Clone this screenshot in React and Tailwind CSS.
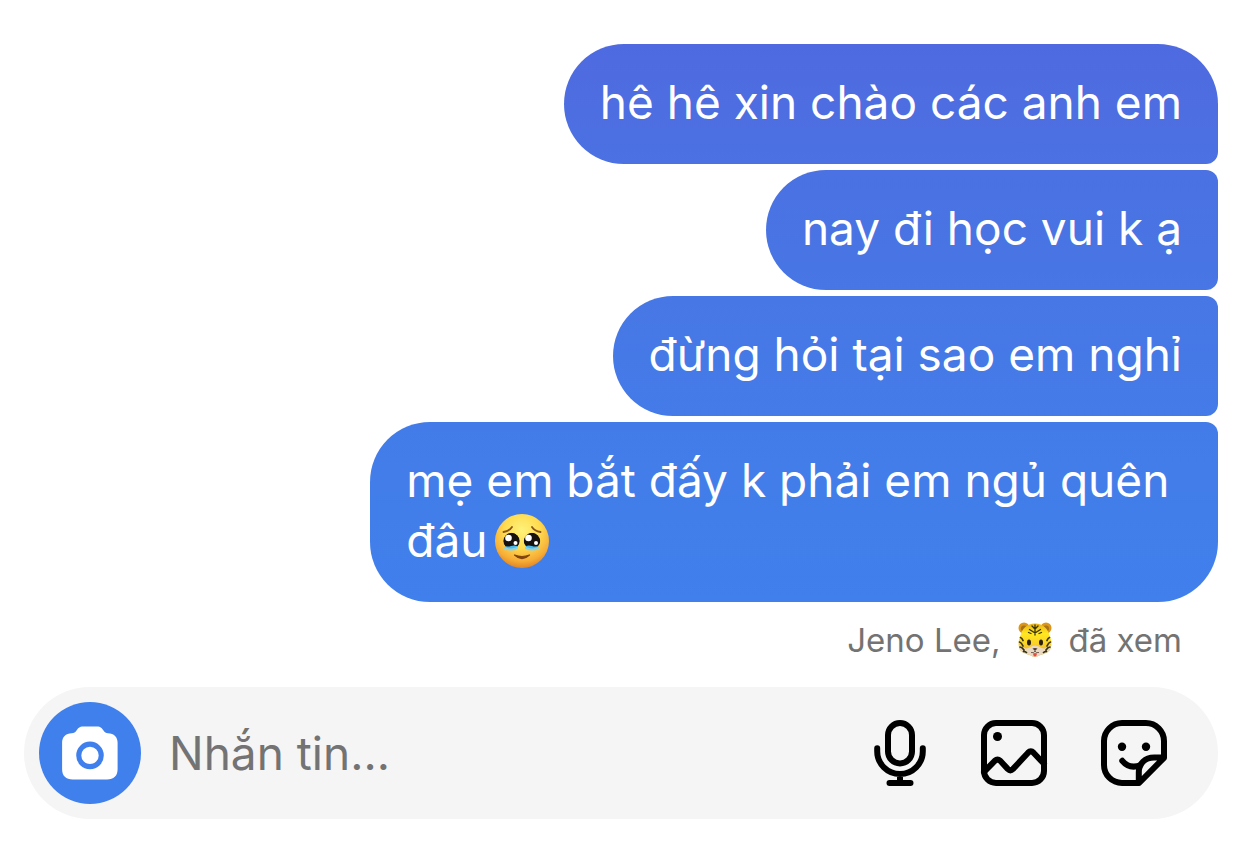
import React, { useState } from 'react';

const PleadingFace = () => (
  <svg role="img" aria-label="🥹" viewBox="0 0 54 54" className="inline-block size-[54px] ml-2 -mt-1.5 align-middle">
    <defs>
      <radialGradient id="face" cx="0.5" cy="0.3" r="0.72">
        <stop offset="0" stopColor="#fff27a" />
        <stop offset="0.45" stopColor="#ffdc50" />
        <stop offset="0.8" stopColor="#f6ac36" />
        <stop offset="1" stopColor="#dd7f22" />
      </radialGradient>
      <clipPath id="leftEye">
        <circle cx="16.500" cy="27" r="8.300" />
      </clipPath>
      <clipPath id="rightEye">
        <circle cx="37" cy="27" r="8.300" />
      </clipPath>
    </defs>
    <circle cx="27" cy="27" r="27" fill="url(#face)" />
    <g clipPath="url(#leftEye)">
      <circle cx="16.500" cy="27" r="8.300" fill="#18120f" />
      <path d="M8 31q4 2.500 8 1t9 1v6H8z" fill="#48b9ea" />
    </g>
    <g clipPath="url(#rightEye)">
      <circle cx="37" cy="27" r="8.300" fill="#18120f" />
      <path d="M28 33q5-2.500 9-1t9-1v8H28z" fill="#48b9ea" />
    </g>
    <path d="M10 34q6 3 12 0M31 34q6 3 12 0" fill="none" stroke="#86d3e8" strokeWidth="2" strokeLinecap="round" />
    <circle cx="13.500" cy="24" r="3.300" fill="#fff" />
    <circle cx="20.500" cy="29" r="2" fill="#fff" />
    <circle cx="33.500" cy="24" r="3.300" fill="#fff" />
    <circle cx="41" cy="29" r="2" fill="#fff" />
    <path d="M8.500 18q6-1 8.500-5M37 13q2.500 4 8.500 5" fill="none" stroke="#8a541a" strokeWidth="1.800" strokeLinecap="round" />
    <path d="M19.500 41q7.500 7 15 0-7.500 3-15 0z" fill="#80440f" stroke="#80440f" strokeWidth="1.200" strokeLinejoin="round" />
  </svg>
);

const TigerFace = () => (
  <svg role="img" aria-label="🐯" viewBox="0 0 34 36" className="inline-block w-[34px] h-9 mx-[17px] -mt-1.5 align-middle">
    <defs>
      <linearGradient id="fur" x1="0" y1="0" x2="0" y2="1">
        <stop offset="0" stopColor="#e8b01c" />
        <stop offset="0.3" stopColor="#ffe81e" />
        <stop offset="0.6" stopColor="#fbd22a" />
        <stop offset="1" stopColor="#e5a52d" />
      </linearGradient>
    </defs>
    <circle cx="6" cy="6" r="5.500" fill="#d99618" />
    <circle cx="28" cy="6" r="5.500" fill="#d99618" />
    <circle cx="6" cy="6.500" r="3" fill="#a8701a" />
    <circle cx="28" cy="6.500" r="3" fill="#a8701a" />
    <path d="M17 1.500c8 0 13 5 14.500 12 2.500 5 2.500 12 0 15-3 3-7.500 4-10.500 5-2 1.800-6 1.800-8 0-3-1-7.500-2-10.500-5-2.500-3-2.500-10 0-15C4 6.500 9 1.500 17 1.500z" fill="url(#fur)" />
    <path d="M1 23c2 0 4 3.500 7 3.500 3.500 0 5-3 9-3s5.500 3 9 3c3 0 5-3.500 7-3.500.5 7-6.500 8.500-12 10.500-2 1.800-6 1.800-8 0C7.500 31.500.5 30 1 23z" fill="#e9d8c2" />
    <g fill="none" stroke="#37330f" strokeLinecap="round">
      <path d="M17 3v10M14 4l3 3 3-3M11.500 7.500L17 11l5.500-3.500M10.500 10.500l2.500 1M23.500 10.500l-2.500 1" strokeWidth="1.300" />
      <path d="M2.500 15.500q1.500.5 2.500 3M1.500 20q2 .5 3.500 4M2 25q2 0 4 3M5.500 29.500q2 0 3 1M31.500 15.500q-1.500.5-2.500 3M32.500 20q-2 .5-3.500 4M32 25q-2 0-4 3M28.500 29.500q-2 0-3 1" strokeWidth="1.700" />
    </g>
    <ellipse cx="11" cy="20.500" rx="2" ry="3" fill="#2a200c" />
    <ellipse cx="23" cy="20.500" rx="2" ry="3" fill="#2a200c" />
    <path d="M14.500 26.500q2.500-1 5 0L17 29z" fill="#4b3932" />
    <path d="M15 31.500q2-1 4 0-.3 3-2 3t-2-3z" fill="#e64b48" />
    <path d="M13 30.500q3 1 4-1.500 1 2.500 4 1.500" fill="none" stroke="#665045" strokeWidth="0.900" />
  </svg>
);

const CameraIcon = () => (
  <svg viewBox="0 0 24 24" className="size-[72px]" aria-hidden="true">
    <path
      fill="#fff"
      d="M9.800 3.200h4.500c1.300 0 1.700.6 2.200 1.300.4.600.8.900 1.500.9 2 0 3.200 1.300 3.200 3.200v8.800c0 2.200-1.300 3.400-3.500 3.400H6.200c-2.200 0-3.500-1.200-3.500-3.400V8.600c0-1.900 1.200-3.200 3.200-3.200.8 0 1.200-.3 1.600-.9.500-.700.9-1.300 2.300-1.300z"
    />
    <circle cx="12" cy="12.800" r="3.750" fill="none" stroke="#4080ec" strokeWidth="1.700" />
  </svg>
);

const iconProps = {
  viewBox: '0 0 24 24',
  className: 'size-[72px]',
  fill: 'none',
  stroke: '#000',
  strokeWidth: 2,
  strokeLinecap: 'round',
  strokeLinejoin: 'round',
  'aria-hidden': true
};

const MicIcon = () => (
  <svg {...iconProps}>
    <rect x="10" y="2" width="8" height="13.500" rx="4" />
    <path d="M6.400 10.400v1a7.600 7.600 0 0 0 15.200 0v-1M14 19v3M10.500 22h7" />
  </svg>
);

const PhotoIcon = () => (
  <svg {...iconProps}>
    <rect x="2" y="2" width="20" height="20" rx="4" />
    <circle cx="6.500" cy="6.500" r="1.500" fill="#000" stroke="none" />
    <path d="M2 18.300l3.600-3.700q.9-.8 1.800 0l2.500 2.700q.9.900 1.800 0l5-5.400q.9-.9 1.800 0L22 15.600" />
  </svg>
);

const StickerIcon = () => (
  <svg {...iconProps}>
    <path d="M13.700 22H8a6 6 0 0 1-6-6V8a6 6 0 0 1 6-6h8a6 6 0 0 1 6 6v5.600L13.700 22zM22 13.500h-3.300c-3 0-5.100 2-5.100 4.900V22" />
    <path d="M8.100 14.600c1.500 1.800 3.600 2.400 6 1.500" />
    <circle cx="8" cy="9.900" r="1.400" fill="#000" stroke="none" />
    <circle cx="16" cy="9.900" r="1.400" fill="#000" stroke="none" />
  </svg>
);

const messages = [
  { id: 1, text: 'hê hê xin chào các anh em', style: 'rounded-tr-[60px] rounded-br-xl from-[#4f6ae0] to-[#4b71e2]' },
  { id: 2, text: 'nay đi học vui k ạ', style: 'rounded-r-xl from-[#4b71e2] to-[#4776e5]' },
  { id: 3, text: 'đừng hỏi tại sao em nghỉ', style: 'rounded-r-xl from-[#4777e5] to-[#447be8]' },
  { id: 4, text: 'mẹ em bắt đấy k phải em ngủ quên đâu', emoji: true, style: 'rounded-tr-xl rounded-br-[60px] from-[#437ce8] to-[#4080ec]' }
];

const actions = [
  { label: 'Ghi âm', Icon: MicIcon },
  { label: 'Ảnh', Icon: PhotoIcon },
  { label: 'Nhãn dán', Icon: StickerIcon }
];

export default function App() {
  const [draft, setDraft] = useState('');

  return (
    <main className="bg-white px-6 pt-11 pb-6 font-['Inter','Noto_Sans',sans-serif]">
      {/* Messages */}
      <div className="flex flex-col items-end gap-1.5">
        {messages.map((message) => (
          <p
            key={message.id}
            className={`max-w-[71%] rounded-l-[60px] bg-linear-to-b px-9 pt-7 pb-8 text-[46px] leading-[60px] text-white ${message.style}`}
          >
            {message.text}
            {message.emoji && <PleadingFace />}
          </p>
        ))}
      </div>

      {/* Seen by */}
      <p className="mt-[18px] mb-[27px] pr-9 text-right text-[33px] leading-10 text-[#737373]">
        Jeno Lee,
        <TigerFace />
        đã xem
      </p>

      {/* Composer */}
      <form
        onSubmit={(e) => e.preventDefault()}
        className="flex items-center rounded-full bg-[#f5f5f6] py-[15px] pl-[15px] pr-12"
      >
        <button type="button" aria-label="Máy ảnh" className="flex size-[102px] shrink-0 items-center justify-center rounded-full bg-[#4080ec]">
          <CameraIcon />
        </button>
        <input
          type="text"
          aria-label="Nhắn tin"
          value={draft}
          onChange={(e) => setDraft(e.target.value)}
          placeholder="Nhắn tin..."
          className="ml-7 min-w-0 flex-1 bg-transparent text-[46px] leading-[60px] text-black outline-none placeholder:text-[#737373]"
        />
        <div className="flex shrink-0 gap-12">
          {actions.map(({ label, Icon }) => (
            <button key={label} type="button" aria-label={label}>
              <Icon />
            </button>
          ))}
        </div>
      </form>
    </main>
  );
}
